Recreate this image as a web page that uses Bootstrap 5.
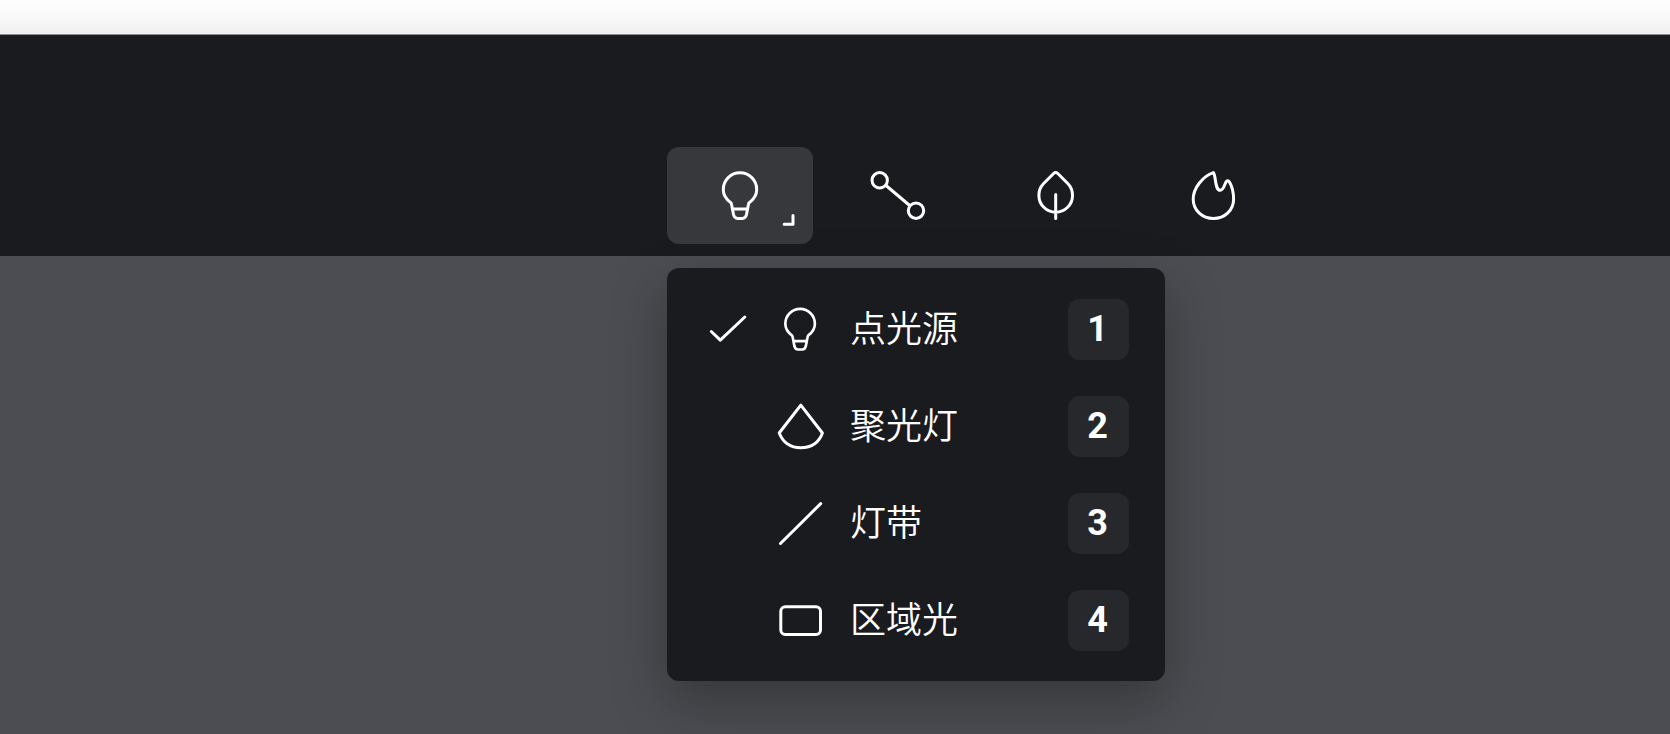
<!DOCTYPE html>
<html lang="zh-CN" data-bs-theme="dark">
<head>
<meta charset="utf-8">
<meta name="viewport" content="width=device-width, initial-scale=1">
<title>灯光工具</title>
<link href="https://cdn.jsdelivr.net/npm/bootstrap@5.3.0/dist/css/bootstrap.min.css" rel="stylesheet">
<style>
  body {
    background: #4c4d52;
    color: #fff;
    font-family: "Liberation Sans", "Noto Sans CJK SC", sans-serif;
  }
  svg {
    display: block;
    flex: none;
    fill: none;
    stroke: #fff;
    stroke-width: 3;
    stroke-linecap: round;
    stroke-linejoin: round;
  }
  .title-strip {
    height: 35px;
    background: linear-gradient(#fdfdfd, #f9f9f9 50%, #efefef);
    border-bottom: 1px solid #8b8f92;
  }
  .tool-header { background: #1a1b1f; padding: 112px 0 12px; }
  .tool-row, .light-menu { margin-left: calc(50% - 168px); }
  .tool-row { gap: 12px; }
  .tool-btn {
    --bs-btn-padding-x: 0;
    --bs-btn-padding-y: 0;
    --bs-btn-border-width: 0;
    --bs-btn-border-radius: 12px;
    --bs-btn-hover-bg: #2a2b2f;
    --bs-btn-active-bg: #37383c;
    width: 146px;
    height: 97px;
  }
  .corner { right: 17px; bottom: 17px; }
  .light-menu {
    width: 498px;
    margin-top: 12px;
    padding: 13px 0 12px;
    background: #1a1b1f;
    border-radius: 12px;
    box-shadow: 0 20px 56px rgba(0, 0, 0, .3);
  }
  .light-item {
    height: 97px;
    padding: 0 36px 0 41px;
    color: #fff;
    font-size: 36px;
    line-height: 48px;
  }
  .tick { width: 40px; margin-right: 26px; }
  .light-name {
    margin-left: 22px;
    padding-bottom: 8px;
    font-family: "Noto Sans CJK SC DemiLight", "Noto Sans CJK SC", sans-serif;
    font-weight: 350;
  }
  .key {
    width: 61px;
    height: 61px;
    border-radius: 12px;
    background: #27282c;
    color: #fff;
    font-family: Roboto, "Liberation Sans", sans-serif;
    font-size: 36px;
    font-weight: 700;
    padding: 0 2px 2px 0;
  }
</style>
</head>
<body class="min-vh-100">
<svg width="0" height="0" class="position-absolute" aria-hidden="true">
  <symbol id="bulb" viewBox="0 0 60 61">
    <path d="M20.7 37.6C16 34 13.3 30 13.3 24.4A16.7 16.7 0 0 1 46.7 24.4C46.7 30 44 34 39.3 37.6Q38.5 38.5 38.3 40L36.5 49.5Q35.5 53.5 32.5 53.5H27.5Q24.5 53.5 23.5 49.5L21.7 40Q21.5 38.5 20.7 37.6ZM22.5 44H37.5"/>
  </symbol>
</svg>

<div class="title-strip"></div>

<header class="tool-header">
  <div class="tool-row d-flex" role="toolbar" aria-label="工具">
    <button type="button" class="btn tool-btn active position-relative d-flex align-items-center justify-content-center" aria-label="灯光" aria-expanded="true">
      <svg width="60" height="61"><use href="#bulb"/></svg>
      <svg class="corner position-absolute" width="14" height="14" viewBox="0 0 14 14"><path d="M2.2 11.3H11V2.5"/></svg>
    </button>
    <button type="button" class="btn tool-btn d-flex align-items-center justify-content-center" aria-label="连线">
      <svg width="60" height="61" viewBox="0 0 60 61"><circle cx="11.7" cy="15.3" r="7.7"/><circle cx="48" cy="45.7" r="7.7"/><path d="M18 20.5L41.7 40.5"/></svg>
    </button>
    <button type="button" class="btn tool-btn d-flex align-items-center justify-content-center" aria-label="植物">
      <svg width="60" height="61" viewBox="0 0 60 61"><path d="M27.6 8.5Q29.7 6.6 31.8 8.5L42 18.8C45 22 46.5 26 46.5 30.4A16.8 16.8 0 0 1 12.9 30.4C12.9 26 14.4 22 17.4 18.8ZM29.7 29.5V53.5"/></svg>
    </button>
    <button type="button" class="btn tool-btn d-flex align-items-center justify-content-center" aria-label="火焰">
      <svg width="60" height="61" viewBox="0 0 60 61"><path d="M29.4 7.6C19 11 9.2 23 9.2 34.3C9.2 45 18 53.5 29.4 53.5C41 53.5 49.6 45 49.6 34.3C49.6 28 47.8 21 45.6 17.3Q43.6 14 41.8 17.3C40.1 21 39.3 25.3 36.2 25.3C32.8 25.3 32 20 31.2 14Q30.5 9 29.4 7.6Z"/></svg>
    </button>
  </div>
</header>

<ul class="light-menu list-unstyled mb-0" role="menu" aria-label="灯光类型">
  <li role="none">
    <button type="button" role="menuitemradio" aria-checked="true" class="light-item btn border-0 rounded-0 w-100 d-flex align-items-center">
      <span class="tick"><svg width="40" height="54" viewBox="0 0 40 54"><path d="M3.3 28.5L12.3 37.2L36.8 14"/></svg></span>
      <svg width="54" height="54" viewBox="1 1 60 61"><use href="#bulb" width="60" height="61"/></svg>
      <span class="light-name">点光源</span>
      <kbd class="key ms-auto d-flex align-items-center justify-content-center">1</kbd>
    </button>
  </li>
  <li role="none">
    <button type="button" role="menuitemradio" aria-checked="false" class="light-item btn border-0 rounded-0 w-100 d-flex align-items-center">
      <span class="tick"></span>
      <svg width="54" height="54" viewBox="0 0 54 54"><path d="M26.8 5.2L5.2 33C9 42.5 16.5 47.7 26.8 47.7C37 47.7 45 42.5 48.4 33Z"/></svg>
      <span class="light-name">聚光灯</span>
      <kbd class="key ms-auto d-flex align-items-center justify-content-center">2</kbd>
    </button>
  </li>
  <li role="none">
    <button type="button" role="menuitemradio" aria-checked="false" class="light-item btn border-0 rounded-0 w-100 d-flex align-items-center">
      <span class="tick"></span>
      <svg width="54" height="54" viewBox="0 0 54 54"><path d="M6.5 46.5L46.7 6.6"/></svg>
      <span class="light-name">灯带</span>
      <kbd class="key ms-auto d-flex align-items-center justify-content-center">3</kbd>
    </button>
  </li>
  <li role="none">
    <button type="button" role="menuitemradio" aria-checked="false" class="light-item btn border-0 rounded-0 w-100 d-flex align-items-center">
      <span class="tick"></span>
      <svg width="54" height="54" viewBox="0 0 54 54"><rect x="6.8" y="12.7" width="39.7" height="27.7" rx="4.5"/></svg>
      <span class="light-name">区域光</span>
      <kbd class="key ms-auto d-flex align-items-center justify-content-center">4</kbd>
    </button>
  </li>
</ul>
<script src="https://cdn.jsdelivr.net/npm/bootstrap@5.3.0/dist/js/bootstrap.bundle.min.js"></script>
</body>
</html>
